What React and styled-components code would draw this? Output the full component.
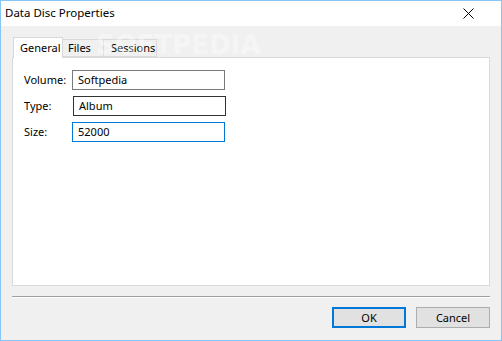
import React from "react";
import styled, { createGlobalStyle } from "styled-components";

const GlobalStyle = createGlobalStyle`
  html, body {
    margin: 0;
    padding: 0;
    background: #ffffff;
  }
  * {
    box-sizing: border-box;
  }
`;

const Window = styled.div`
  width: 502px;
  height: 341px;
  border: 1px solid #88c4f4;
  background: #f0f0f0;
  display: flex;
  flex-direction: column;
  font-family: "Noto Sans", "Open Sans", sans-serif;
  font-size: 11px;
  color: #000;
  position: relative;
  overflow: hidden;
`;

const TitleBar = styled.div`
  height: 25px;
  background: #ffffff;
  display: flex;
  align-items: center;
  justify-content: space-between;
  padding: 0 0 0 4px;
`;

const Title = styled.span`
  font-size: 11.5px;
  line-height: 16px;
  margin-top: -2px;
`;

const CloseButton = styled.div`
  width: 46px;
  height: 25px;
  display: flex;
  align-items: center;
  justify-content: center;
  margin-right: 10px;
  margin-top: -1px;
`;

const Body = styled.div`
  flex: 1;
  display: flex;
  flex-direction: column;
  padding: 11px 11px 0 11px;
`;

const TabStrip = styled.div`
  display: flex;
  align-items: flex-end;
  height: 20px;
  padding-left: 1px;
`;

const Tab = styled.div`
  width: ${(p) => p.$width}px;
  height: ${(p) => (p.$active ? "21px" : "18px")};
  padding-left: ${(p) => p.$pad}px;
  display: flex;
  align-items: center;
  background: ${(p) => (p.$active ? "#ffffff" : "#f0f0f0")};
  border: 1px solid #d9d9d9;
  border-bottom: ${(p) => (p.$active ? "none" : "1px solid #d9d9d9")};
  border-left: ${(p) => (p.$active ? "1px solid #d9d9d9" : "none")};
  margin-bottom: ${(p) => (p.$active ? "-1px" : "0")};
  position: relative;
  z-index: ${(p) => (p.$active ? 2 : 1)};
  line-height: 14px;
`;

const Panel = styled.div`
  height: 229px;
  background: #ffffff;
  border: 1px solid #d9d9d9;
  padding: 12px 0 0 11px;
  display: flex;
  flex-direction: column;
  gap: 6px;
`;

const Row = styled.div`
  display: flex;
  align-items: center;
  height: 20px;
`;

const Label = styled.span`
  width: 48px;
  line-height: 14px;
`;

const Field = styled.div`
  width: 153px;
  height: 20px;
  margin-left: ${(p) => p.$shift || 0}px;
  border: 1px solid ${(p) => p.$border};
  background: #ffffff;
  padding: 0 5px;
  display: flex;
  align-items: center;
  line-height: 14px;
`;

const Separator = styled.div`
  margin-top: 10px;
  height: 2px;
  border-top: 1px solid #a0a0a0;
  border-bottom: 1px solid #ffffff;
`;

const ButtonBar = styled.div`
  display: flex;
  justify-content: flex-end;
  gap: 10px;
  margin-top: 9px;
`;

const Button = styled.div`
  width: 74px;
  height: 21px;
  background: #e1e1e1;
  border: ${(p) => (p.$default ? "2px solid #0078d7" : "1px solid #adadad")};
  display: flex;
  align-items: center;
  justify-content: center;
  line-height: 14px;
`;

const Watermark = styled.div`
  position: absolute;
  left: 95px;
  top: 29px;
  font-family: "DejaVu Sans", sans-serif;
  font-weight: bold;
  font-size: 26px;
  letter-spacing: 0px;
  color: rgba(255, 255, 255, 0.4);
  pointer-events: none;
  z-index: 5;
`;

export default function App() {
  return (
    <>
      <GlobalStyle />
      <Window>
        <TitleBar>
          <Title>Data Disc Properties</Title>
          <CloseButton>
            <svg width="11" height="11" viewBox="0 0 11 11">
              <path d="M0.5 0.5 L10.5 10.5 M10.5 0.5 L0.5 10.5" stroke="#000" strokeWidth="1" />
            </svg>
          </CloseButton>
        </TitleBar>
        <Body>
          <TabStrip>
            <Tab $active $width={50} $pad={6}>General</Tab>
            <Tab $width={41} $pad={5}>Files</Tab>
            <Tab $width={53} $pad={7}>Sessions</Tab>
          </TabStrip>
          <Panel>
            <Row>
              <Label>Volume:</Label>
              <Field $border="#7a7a7a">Softpedia</Field>
            </Row>
            <Row>
              <Label>Type:</Label>
              <Field $border="#333333" $shift={1}>Album</Field>
            </Row>
            <Row>
              <Label>Size:</Label>
              <Field $border="#0078d7">52000</Field>
            </Row>
          </Panel>
          <Separator />
          <ButtonBar>
            <Button $default>OK</Button>
            <Button>Cancel</Button>
          </ButtonBar>
        </Body>
        <Watermark>SOFTPEDIA</Watermark>
      </Window>
    </>
  );
}
